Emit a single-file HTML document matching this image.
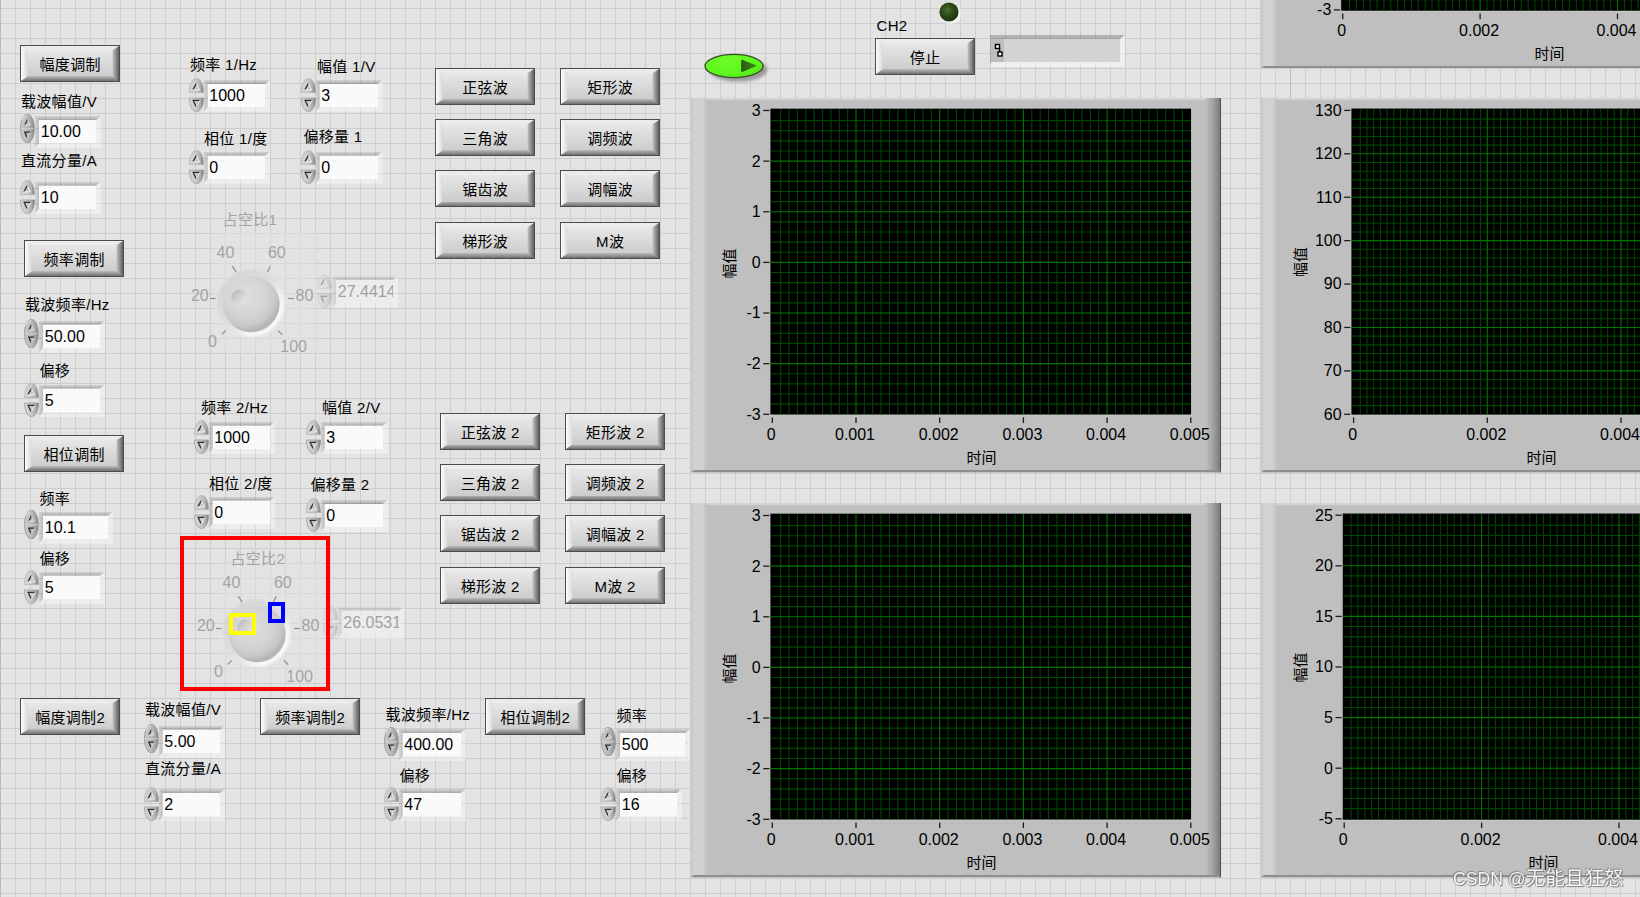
<!DOCTYPE html>
<html lang="zh-CN"><head><meta charset="utf-8"><title>LabVIEW front panel</title>
<style>
html,body{margin:0;padding:0}
body{width:1640px;height:897px;overflow:hidden;position:relative;background-color:#e3e3e3;
background-image:linear-gradient(to right,#cdcdcd 1px,transparent 1px),linear-gradient(to bottom,#cdcdcd 1px,transparent 1px);
background-size:15px 15px;background-position:0 8px;
font:15.5px/20px "Liberation Sans","Noto Sans CJK SC",sans-serif;color:#000}
.a{position:absolute}
.lb{position:absolute;white-space:nowrap;height:20px;line-height:20px;font-size:15px;letter-spacing:.3px}
.g{color:#a3a3a3}
.btn{position:absolute;width:100px;height:37px;box-sizing:border-box;border:1px solid #4c4c4c;text-align:center;line-height:35px;background:linear-gradient(to right,#fdfdfd 0,#dadada 6.5px,#dadada 6.5px,#c4c4c4 91.5px,#5e5e5e 98px)}
.btn::before{content:"";position:absolute;left:0;top:0;width:98px;height:35px;clip-path:polygon(0 0,6.5px 4.3px,6.5px 30.5px,0 35px,98px 35px,91.5px 30.5px,91.5px 4.3px,98px 0);background:linear-gradient(to bottom,#ebebeb 0,#ebebeb 4.3px,#e7e7e7 4.3px,#cccccc 30.5px,#b4b4b4 30.5px,#707070 35px)}
.btn span{position:relative;top:.6px;font-size:15px;letter-spacing:.3px;margin-right:-.3px}
.fld{position:absolute;box-sizing:border-box;border-style:solid;border-width:4px 5px 5px 4px;border-color:transparent rgba(255,255,255,.36) rgba(255,255,255,.36) transparent;background:#fafafa padding-box;height:32px}
.fld b{display:block;font-weight:normal;font-size:16px;height:23px;line-height:24px;padding-left:1.8px;overflow:hidden;white-space:nowrap}
.fld::before{content:"";position:absolute;left:-4px;top:-4px;right:-5px;height:4px;background:linear-gradient(to bottom,rgba(0,0,0,.07),rgba(0,0,0,.25));clip-path:polygon(0 0,100% 0,calc(100% - 5px) 100%,4px 100%)}
.fld::after{content:"";position:absolute;left:-4px;top:-4px;bottom:-5px;width:4px;background:linear-gradient(to right,rgba(0,0,0,.07),rgba(0,0,0,.17));clip-path:polygon(0 0,100% 4px,100% calc(100% - 5px),0 100%)}
.fld.d{background:#ececec padding-box;color:#a0a0a0}
.fld.d::before{background:linear-gradient(to bottom,rgba(0,0,0,.03),rgba(0,0,0,.12))}
.fld.d::after{background:linear-gradient(to right,rgba(0,0,0,.03),rgba(0,0,0,.08))}
svg{display:block}
svg text{font-family:"Liberation Sans","Noto Sans CJK SC",sans-serif;font-size:16px}
</style></head>
<body>
<svg width="0" height="0" style="position:absolute">
<defs>
<linearGradient id="spc" x1="0" y1="0" x2="1" y2="0"><stop offset="0" stop-color="#c9c9c9"/><stop offset=".5" stop-color="#bababa"/><stop offset=".82" stop-color="#a2a2a2"/><stop offset="1" stop-color="#7e7e7e"/></linearGradient>
<linearGradient id="sp" x1="0" y1="0" x2="1" y2="0"><stop offset="0" stop-color="#d6d6d6"/><stop offset=".45" stop-color="#cbcbcb"/><stop offset=".78" stop-color="#aeaeae"/><stop offset="1" stop-color="#7a7a7a"/></linearGradient>
</defs></svg>
<div class="a" style="left:0;top:0;width:1px;height:897px;background:#b9b9b9"></div>
<div class="btn" style="left:20px;top:45px"><span>幅度调制</span></div>
<div class="lb" style="left:21px;top:91.5px">载波幅值/V</div>
<svg class="a" style="left:20px;top:114px" width="15" height="29" viewBox="0 0 15 29"><ellipse cx="7.4" cy="14.6" rx="7" ry="14.3" fill="url(#spc)" stroke="#8c8c8c" stroke-width=".7"/><path d="M2.2,6.5 C3.2,3.6 5,1.8 7,1.3" stroke="#d9d9d9" stroke-width="1.2" fill="none"/><line x1="0.6" y1="14.7" x2="14.2" y2="14.7" stroke="#d4d4d4" stroke-width=".8"/><path d="M5,10.8 L7.2,6.3 L7.7,6.3" stroke="#2e2e2e" stroke-width="1.3" fill="none"/><path d="M5,11 L10.2,11 L7.7,6.5" stroke="#e9e9e9" stroke-width=".9" fill="none"/><path d="M10.2,18.1 L4.8,18.1 L6.9,23.3" stroke="#2e2e2e" stroke-width="1.3" fill="none"/><path d="M7.4,23.2 L10.3,18.4" stroke="#e9e9e9" stroke-width=".9" fill="none"/></svg><div class="fld" style="left:35px;top:116px;width:66px"><b>10.00</b></div>
<div class="lb" style="left:21px;top:151px">直流分量/A</div>
<svg class="a" style="left:20px;top:179.5px" width="15" height="34" viewBox="0 0 15 34"><path d="M0.5,14.6 C0.5,5 4,0.5 7.5,0.5 C11,0.5 14.5,5 14.5,14.6 Z" fill="url(#sp)" stroke="#a8a8a8" stroke-width=".6"/><path d="M0.5,20 C0.5,29 4,33.5 7.5,33.5 C11,33.5 14.5,29 14.5,20 Z" fill="url(#sp)" stroke="#8e8e8e" stroke-width=".6"/><path d="M4,11.6 L7,6.2 L7.6,6.2" stroke="#2e2e2e" stroke-width="1.3" fill="none"/><path d="M4,11.9 L10.6,11.9 L7.6,6.2" stroke="#f4f4f4" stroke-width="1" fill="none"/><path d="M10.5,22.4 L4.2,22.4 L7,28.5" stroke="#2e2e2e" stroke-width="1.3" fill="none"/><path d="M7.4,28.5 L10.8,22.6" stroke="#f4f4f4" stroke-width="1" fill="none"/></svg><div class="fld" style="left:35px;top:181.5px;width:66px"><b>10</b></div>
<div class="btn" style="left:24px;top:240px"><span>频率调制</span></div>
<div class="lb" style="left:25px;top:295px">载波频率/Hz</div>
<svg class="a" style="left:24px;top:318.5px" width="15" height="29" viewBox="0 0 15 29"><ellipse cx="7.4" cy="14.6" rx="7" ry="14.3" fill="url(#spc)" stroke="#8c8c8c" stroke-width=".7"/><path d="M2.2,6.5 C3.2,3.6 5,1.8 7,1.3" stroke="#d9d9d9" stroke-width="1.2" fill="none"/><line x1="0.6" y1="14.7" x2="14.2" y2="14.7" stroke="#d4d4d4" stroke-width=".8"/><path d="M5,10.8 L7.2,6.3 L7.7,6.3" stroke="#2e2e2e" stroke-width="1.3" fill="none"/><path d="M5,11 L10.2,11 L7.7,6.5" stroke="#e9e9e9" stroke-width=".9" fill="none"/><path d="M10.2,18.1 L4.8,18.1 L6.9,23.3" stroke="#2e2e2e" stroke-width="1.3" fill="none"/><path d="M7.4,23.2 L10.3,18.4" stroke="#e9e9e9" stroke-width=".9" fill="none"/></svg><div class="fld" style="left:39px;top:320.5px;width:66px"><b>50.00</b></div>
<div class="lb" style="left:39.5px;top:361px">偏移</div>
<svg class="a" style="left:24px;top:382.5px" width="15" height="34" viewBox="0 0 15 34"><path d="M0.5,14.6 C0.5,5 4,0.5 7.5,0.5 C11,0.5 14.5,5 14.5,14.6 Z" fill="url(#sp)" stroke="#a8a8a8" stroke-width=".6"/><path d="M0.5,20 C0.5,29 4,33.5 7.5,33.5 C11,33.5 14.5,29 14.5,20 Z" fill="url(#sp)" stroke="#8e8e8e" stroke-width=".6"/><path d="M4,11.6 L7,6.2 L7.6,6.2" stroke="#2e2e2e" stroke-width="1.3" fill="none"/><path d="M4,11.9 L10.6,11.9 L7.6,6.2" stroke="#f4f4f4" stroke-width="1" fill="none"/><path d="M10.5,22.4 L4.2,22.4 L7,28.5" stroke="#2e2e2e" stroke-width="1.3" fill="none"/><path d="M7.4,28.5 L10.8,22.6" stroke="#f4f4f4" stroke-width="1" fill="none"/></svg><div class="fld" style="left:39px;top:384.5px;width:66px"><b>5</b></div>
<div class="btn" style="left:24px;top:435px"><span>相位调制</span></div>
<div class="lb" style="left:39.5px;top:488.5px">频率</div>
<svg class="a" style="left:24px;top:509.5px" width="15" height="29" viewBox="0 0 15 29"><ellipse cx="7.4" cy="14.6" rx="7" ry="14.3" fill="url(#spc)" stroke="#8c8c8c" stroke-width=".7"/><path d="M2.2,6.5 C3.2,3.6 5,1.8 7,1.3" stroke="#d9d9d9" stroke-width="1.2" fill="none"/><line x1="0.6" y1="14.7" x2="14.2" y2="14.7" stroke="#d4d4d4" stroke-width=".8"/><path d="M5,10.8 L7.2,6.3 L7.7,6.3" stroke="#2e2e2e" stroke-width="1.3" fill="none"/><path d="M5,11 L10.2,11 L7.7,6.5" stroke="#e9e9e9" stroke-width=".9" fill="none"/><path d="M10.2,18.1 L4.8,18.1 L6.9,23.3" stroke="#2e2e2e" stroke-width="1.3" fill="none"/><path d="M7.4,23.2 L10.3,18.4" stroke="#e9e9e9" stroke-width=".9" fill="none"/></svg><div class="fld" style="left:39px;top:511.5px;width:74px"><b>10.1</b></div>
<div class="lb" style="left:39.5px;top:549px">偏移</div>
<svg class="a" style="left:24px;top:569.5px" width="15" height="34" viewBox="0 0 15 34"><path d="M0.5,14.6 C0.5,5 4,0.5 7.5,0.5 C11,0.5 14.5,5 14.5,14.6 Z" fill="url(#sp)" stroke="#a8a8a8" stroke-width=".6"/><path d="M0.5,20 C0.5,29 4,33.5 7.5,33.5 C11,33.5 14.5,29 14.5,20 Z" fill="url(#sp)" stroke="#8e8e8e" stroke-width=".6"/><path d="M4,11.6 L7,6.2 L7.6,6.2" stroke="#2e2e2e" stroke-width="1.3" fill="none"/><path d="M4,11.9 L10.6,11.9 L7.6,6.2" stroke="#f4f4f4" stroke-width="1" fill="none"/><path d="M10.5,22.4 L4.2,22.4 L7,28.5" stroke="#2e2e2e" stroke-width="1.3" fill="none"/><path d="M7.4,28.5 L10.8,22.6" stroke="#f4f4f4" stroke-width="1" fill="none"/></svg><div class="fld" style="left:39px;top:571.5px;width:66px"><b>5</b></div>
<div class="lb" style="left:190px;top:55px">频率 1/Hz</div>
<svg class="a" style="left:188.5px;top:78px" width="15" height="34" viewBox="0 0 15 34"><path d="M0.5,14.6 C0.5,5 4,0.5 7.5,0.5 C11,0.5 14.5,5 14.5,14.6 Z" fill="url(#sp)" stroke="#a8a8a8" stroke-width=".6"/><path d="M0.5,20 C0.5,29 4,33.5 7.5,33.5 C11,33.5 14.5,29 14.5,20 Z" fill="url(#sp)" stroke="#8e8e8e" stroke-width=".6"/><path d="M4,11.6 L7,6.2 L7.6,6.2" stroke="#2e2e2e" stroke-width="1.3" fill="none"/><path d="M4,11.9 L10.6,11.9 L7.6,6.2" stroke="#f4f4f4" stroke-width="1" fill="none"/><path d="M10.5,22.4 L4.2,22.4 L7,28.5" stroke="#2e2e2e" stroke-width="1.3" fill="none"/><path d="M7.4,28.5 L10.8,22.6" stroke="#f4f4f4" stroke-width="1" fill="none"/></svg><div class="fld" style="left:203.5px;top:80px;width:66.5px"><b>1000</b></div>
<div class="lb" style="left:317px;top:57px">幅值 1/V</div>
<svg class="a" style="left:300.5px;top:78px" width="15" height="34" viewBox="0 0 15 34"><path d="M0.5,14.6 C0.5,5 4,0.5 7.5,0.5 C11,0.5 14.5,5 14.5,14.6 Z" fill="url(#sp)" stroke="#a8a8a8" stroke-width=".6"/><path d="M0.5,20 C0.5,29 4,33.5 7.5,33.5 C11,33.5 14.5,29 14.5,20 Z" fill="url(#sp)" stroke="#8e8e8e" stroke-width=".6"/><path d="M4,11.6 L7,6.2 L7.6,6.2" stroke="#2e2e2e" stroke-width="1.3" fill="none"/><path d="M4,11.9 L10.6,11.9 L7.6,6.2" stroke="#f4f4f4" stroke-width="1" fill="none"/><path d="M10.5,22.4 L4.2,22.4 L7,28.5" stroke="#2e2e2e" stroke-width="1.3" fill="none"/><path d="M7.4,28.5 L10.8,22.6" stroke="#f4f4f4" stroke-width="1" fill="none"/></svg><div class="fld" style="left:315.5px;top:80px;width:67px"><b>3</b></div>
<div class="lb" style="left:204px;top:129px">相位 1/度</div>
<svg class="a" style="left:188.5px;top:149.5px" width="15" height="34" viewBox="0 0 15 34"><path d="M0.5,14.6 C0.5,5 4,0.5 7.5,0.5 C11,0.5 14.5,5 14.5,14.6 Z" fill="url(#sp)" stroke="#a8a8a8" stroke-width=".6"/><path d="M0.5,20 C0.5,29 4,33.5 7.5,33.5 C11,33.5 14.5,29 14.5,20 Z" fill="url(#sp)" stroke="#8e8e8e" stroke-width=".6"/><path d="M4,11.6 L7,6.2 L7.6,6.2" stroke="#2e2e2e" stroke-width="1.3" fill="none"/><path d="M4,11.9 L10.6,11.9 L7.6,6.2" stroke="#f4f4f4" stroke-width="1" fill="none"/><path d="M10.5,22.4 L4.2,22.4 L7,28.5" stroke="#2e2e2e" stroke-width="1.3" fill="none"/><path d="M7.4,28.5 L10.8,22.6" stroke="#f4f4f4" stroke-width="1" fill="none"/></svg><div class="fld" style="left:203.5px;top:151.5px;width:66.5px"><b>0</b></div>
<div class="lb" style="left:303.5px;top:126.5px">偏移量 1</div>
<svg class="a" style="left:300.5px;top:149.5px" width="15" height="34" viewBox="0 0 15 34"><path d="M0.5,14.6 C0.5,5 4,0.5 7.5,0.5 C11,0.5 14.5,5 14.5,14.6 Z" fill="url(#sp)" stroke="#a8a8a8" stroke-width=".6"/><path d="M0.5,20 C0.5,29 4,33.5 7.5,33.5 C11,33.5 14.5,29 14.5,20 Z" fill="url(#sp)" stroke="#8e8e8e" stroke-width=".6"/><path d="M4,11.6 L7,6.2 L7.6,6.2" stroke="#2e2e2e" stroke-width="1.3" fill="none"/><path d="M4,11.9 L10.6,11.9 L7.6,6.2" stroke="#f4f4f4" stroke-width="1" fill="none"/><path d="M10.5,22.4 L4.2,22.4 L7,28.5" stroke="#2e2e2e" stroke-width="1.3" fill="none"/><path d="M7.4,28.5 L10.8,22.6" stroke="#f4f4f4" stroke-width="1" fill="none"/></svg><div class="fld" style="left:315.5px;top:151.5px;width:67px"><b>0</b></div>
<div class="lb" style="left:201px;top:398px">频率 2/Hz</div>
<svg class="a" style="left:193.5px;top:419.5px" width="15" height="34" viewBox="0 0 15 34"><path d="M0.5,14.6 C0.5,5 4,0.5 7.5,0.5 C11,0.5 14.5,5 14.5,14.6 Z" fill="url(#sp)" stroke="#a8a8a8" stroke-width=".6"/><path d="M0.5,20 C0.5,29 4,33.5 7.5,33.5 C11,33.5 14.5,29 14.5,20 Z" fill="url(#sp)" stroke="#8e8e8e" stroke-width=".6"/><path d="M4,11.6 L7,6.2 L7.6,6.2" stroke="#2e2e2e" stroke-width="1.3" fill="none"/><path d="M4,11.9 L10.6,11.9 L7.6,6.2" stroke="#f4f4f4" stroke-width="1" fill="none"/><path d="M10.5,22.4 L4.2,22.4 L7,28.5" stroke="#2e2e2e" stroke-width="1.3" fill="none"/><path d="M7.4,28.5 L10.8,22.6" stroke="#f4f4f4" stroke-width="1" fill="none"/></svg><div class="fld" style="left:208.5px;top:421.5px;width:66.5px"><b>1000</b></div>
<div class="lb" style="left:322px;top:398px">幅值 2/V</div>
<svg class="a" style="left:305.5px;top:419.5px" width="15" height="34" viewBox="0 0 15 34"><path d="M0.5,14.6 C0.5,5 4,0.5 7.5,0.5 C11,0.5 14.5,5 14.5,14.6 Z" fill="url(#sp)" stroke="#a8a8a8" stroke-width=".6"/><path d="M0.5,20 C0.5,29 4,33.5 7.5,33.5 C11,33.5 14.5,29 14.5,20 Z" fill="url(#sp)" stroke="#8e8e8e" stroke-width=".6"/><path d="M4,11.6 L7,6.2 L7.6,6.2" stroke="#2e2e2e" stroke-width="1.3" fill="none"/><path d="M4,11.9 L10.6,11.9 L7.6,6.2" stroke="#f4f4f4" stroke-width="1" fill="none"/><path d="M10.5,22.4 L4.2,22.4 L7,28.5" stroke="#2e2e2e" stroke-width="1.3" fill="none"/><path d="M7.4,28.5 L10.8,22.6" stroke="#f4f4f4" stroke-width="1" fill="none"/></svg><div class="fld" style="left:320.5px;top:421.5px;width:67px"><b>3</b></div>
<div class="lb" style="left:209px;top:473.5px">相位 2/度</div>
<svg class="a" style="left:193.5px;top:494.5px" width="15" height="34" viewBox="0 0 15 34"><path d="M0.5,14.6 C0.5,5 4,0.5 7.5,0.5 C11,0.5 14.5,5 14.5,14.6 Z" fill="url(#sp)" stroke="#a8a8a8" stroke-width=".6"/><path d="M0.5,20 C0.5,29 4,33.5 7.5,33.5 C11,33.5 14.5,29 14.5,20 Z" fill="url(#sp)" stroke="#8e8e8e" stroke-width=".6"/><path d="M4,11.6 L7,6.2 L7.6,6.2" stroke="#2e2e2e" stroke-width="1.3" fill="none"/><path d="M4,11.9 L10.6,11.9 L7.6,6.2" stroke="#f4f4f4" stroke-width="1" fill="none"/><path d="M10.5,22.4 L4.2,22.4 L7,28.5" stroke="#2e2e2e" stroke-width="1.3" fill="none"/><path d="M7.4,28.5 L10.8,22.6" stroke="#f4f4f4" stroke-width="1" fill="none"/></svg><div class="fld" style="left:208.5px;top:496.5px;width:66.5px"><b>0</b></div>
<div class="lb" style="left:310.5px;top:474.5px">偏移量 2</div>
<svg class="a" style="left:305.5px;top:498px" width="15" height="34" viewBox="0 0 15 34"><path d="M0.5,14.6 C0.5,5 4,0.5 7.5,0.5 C11,0.5 14.5,5 14.5,14.6 Z" fill="url(#sp)" stroke="#a8a8a8" stroke-width=".6"/><path d="M0.5,20 C0.5,29 4,33.5 7.5,33.5 C11,33.5 14.5,29 14.5,20 Z" fill="url(#sp)" stroke="#8e8e8e" stroke-width=".6"/><path d="M4,11.6 L7,6.2 L7.6,6.2" stroke="#2e2e2e" stroke-width="1.3" fill="none"/><path d="M4,11.9 L10.6,11.9 L7.6,6.2" stroke="#f4f4f4" stroke-width="1" fill="none"/><path d="M10.5,22.4 L4.2,22.4 L7,28.5" stroke="#2e2e2e" stroke-width="1.3" fill="none"/><path d="M7.4,28.5 L10.8,22.6" stroke="#f4f4f4" stroke-width="1" fill="none"/></svg><div class="fld" style="left:320.5px;top:500px;width:67px"><b>0</b></div>
<div class="btn" style="left:435px;top:68px"><span>正弦波</span></div>
<div class="btn" style="left:560px;top:68px"><span>矩形波</span></div>
<div class="btn" style="left:435px;top:119px"><span>三角波</span></div>
<div class="btn" style="left:560px;top:119px"><span>调频波</span></div>
<div class="btn" style="left:435px;top:170px"><span>锯齿波</span></div>
<div class="btn" style="left:560px;top:170px"><span>调幅波</span></div>
<div class="btn" style="left:435px;top:222px"><span>梯形波</span></div>
<div class="btn" style="left:560px;top:222px"><span>M波</span></div>
<div class="btn" style="left:440px;top:413px"><span>正弦波 2</span></div>
<div class="btn" style="left:565px;top:413px"><span>矩形波 2</span></div>
<div class="btn" style="left:440px;top:464px"><span>三角波 2</span></div>
<div class="btn" style="left:565px;top:464px"><span>调频波 2</span></div>
<div class="btn" style="left:440px;top:515px"><span>锯齿波 2</span></div>
<div class="btn" style="left:565px;top:515px"><span>调幅波 2</span></div>
<div class="btn" style="left:440px;top:567px"><span>梯形波 2</span></div>
<div class="btn" style="left:565px;top:567px"><span>M波 2</span></div>
<div class="btn" style="left:20px;top:698px"><span>幅度调制2</span></div>
<div class="lb" style="left:145px;top:700px">载波幅值/V</div>
<svg class="a" style="left:143.5px;top:723.5px" width="15" height="29" viewBox="0 0 15 29"><ellipse cx="7.4" cy="14.6" rx="7" ry="14.3" fill="url(#spc)" stroke="#8c8c8c" stroke-width=".7"/><path d="M2.2,6.5 C3.2,3.6 5,1.8 7,1.3" stroke="#d9d9d9" stroke-width="1.2" fill="none"/><line x1="0.6" y1="14.7" x2="14.2" y2="14.7" stroke="#d4d4d4" stroke-width=".8"/><path d="M5,10.8 L7.2,6.3 L7.7,6.3" stroke="#2e2e2e" stroke-width="1.3" fill="none"/><path d="M5,11 L10.2,11 L7.7,6.5" stroke="#e9e9e9" stroke-width=".9" fill="none"/><path d="M10.2,18.1 L4.8,18.1 L6.9,23.3" stroke="#2e2e2e" stroke-width="1.3" fill="none"/><path d="M7.4,23.2 L10.3,18.4" stroke="#e9e9e9" stroke-width=".9" fill="none"/></svg><div class="fld" style="left:158.5px;top:725.5px;width:66.5px"><b>5.00</b></div>
<div class="lb" style="left:145px;top:758.5px">直流分量/A</div>
<svg class="a" style="left:143.5px;top:787px" width="15" height="34" viewBox="0 0 15 34"><path d="M0.5,14.6 C0.5,5 4,0.5 7.5,0.5 C11,0.5 14.5,5 14.5,14.6 Z" fill="url(#sp)" stroke="#a8a8a8" stroke-width=".6"/><path d="M0.5,20 C0.5,29 4,33.5 7.5,33.5 C11,33.5 14.5,29 14.5,20 Z" fill="url(#sp)" stroke="#8e8e8e" stroke-width=".6"/><path d="M4,11.6 L7,6.2 L7.6,6.2" stroke="#2e2e2e" stroke-width="1.3" fill="none"/><path d="M4,11.9 L10.6,11.9 L7.6,6.2" stroke="#f4f4f4" stroke-width="1" fill="none"/><path d="M10.5,22.4 L4.2,22.4 L7,28.5" stroke="#2e2e2e" stroke-width="1.3" fill="none"/><path d="M7.4,28.5 L10.8,22.6" stroke="#f4f4f4" stroke-width="1" fill="none"/></svg><div class="fld" style="left:158.5px;top:789px;width:66.5px"><b>2</b></div>
<div class="btn" style="left:260px;top:698px"><span>频率调制2</span></div>
<div class="lb" style="left:385.5px;top:705px">载波频率/Hz</div>
<svg class="a" style="left:383.5px;top:727px" width="15" height="29" viewBox="0 0 15 29"><ellipse cx="7.4" cy="14.6" rx="7" ry="14.3" fill="url(#spc)" stroke="#8c8c8c" stroke-width=".7"/><path d="M2.2,6.5 C3.2,3.6 5,1.8 7,1.3" stroke="#d9d9d9" stroke-width="1.2" fill="none"/><line x1="0.6" y1="14.7" x2="14.2" y2="14.7" stroke="#d4d4d4" stroke-width=".8"/><path d="M5,10.8 L7.2,6.3 L7.7,6.3" stroke="#2e2e2e" stroke-width="1.3" fill="none"/><path d="M5,11 L10.2,11 L7.7,6.5" stroke="#e9e9e9" stroke-width=".9" fill="none"/><path d="M10.2,18.1 L4.8,18.1 L6.9,23.3" stroke="#2e2e2e" stroke-width="1.3" fill="none"/><path d="M7.4,23.2 L10.3,18.4" stroke="#e9e9e9" stroke-width=".9" fill="none"/></svg><div class="fld" style="left:398.5px;top:729px;width:67px"><b>400.00</b></div>
<div class="lb" style="left:399.5px;top:766px">偏移</div>
<svg class="a" style="left:383.5px;top:787px" width="15" height="34" viewBox="0 0 15 34"><path d="M0.5,14.6 C0.5,5 4,0.5 7.5,0.5 C11,0.5 14.5,5 14.5,14.6 Z" fill="url(#sp)" stroke="#a8a8a8" stroke-width=".6"/><path d="M0.5,20 C0.5,29 4,33.5 7.5,33.5 C11,33.5 14.5,29 14.5,20 Z" fill="url(#sp)" stroke="#8e8e8e" stroke-width=".6"/><path d="M4,11.6 L7,6.2 L7.6,6.2" stroke="#2e2e2e" stroke-width="1.3" fill="none"/><path d="M4,11.9 L10.6,11.9 L7.6,6.2" stroke="#f4f4f4" stroke-width="1" fill="none"/><path d="M10.5,22.4 L4.2,22.4 L7,28.5" stroke="#2e2e2e" stroke-width="1.3" fill="none"/><path d="M7.4,28.5 L10.8,22.6" stroke="#f4f4f4" stroke-width="1" fill="none"/></svg><div class="fld" style="left:398.5px;top:789px;width:67px"><b>47</b></div>
<div class="btn" style="left:485px;top:698px"><span>相位调制2</span></div>
<div class="lb" style="left:616.5px;top:706px">频率</div>
<svg class="a" style="left:601px;top:727px" width="15" height="29" viewBox="0 0 15 29"><ellipse cx="7.4" cy="14.6" rx="7" ry="14.3" fill="url(#spc)" stroke="#8c8c8c" stroke-width=".7"/><path d="M2.2,6.5 C3.2,3.6 5,1.8 7,1.3" stroke="#d9d9d9" stroke-width="1.2" fill="none"/><line x1="0.6" y1="14.7" x2="14.2" y2="14.7" stroke="#d4d4d4" stroke-width=".8"/><path d="M5,10.8 L7.2,6.3 L7.7,6.3" stroke="#2e2e2e" stroke-width="1.3" fill="none"/><path d="M5,11 L10.2,11 L7.7,6.5" stroke="#e9e9e9" stroke-width=".9" fill="none"/><path d="M10.2,18.1 L4.8,18.1 L6.9,23.3" stroke="#2e2e2e" stroke-width="1.3" fill="none"/><path d="M7.4,23.2 L10.3,18.4" stroke="#e9e9e9" stroke-width=".9" fill="none"/></svg><div class="fld" style="left:616px;top:729px;width:74px"><b>500</b></div>
<div class="lb" style="left:616.5px;top:766px">偏移</div>
<svg class="a" style="left:601px;top:787px" width="15" height="34" viewBox="0 0 15 34"><path d="M0.5,14.6 C0.5,5 4,0.5 7.5,0.5 C11,0.5 14.5,5 14.5,14.6 Z" fill="url(#sp)" stroke="#a8a8a8" stroke-width=".6"/><path d="M0.5,20 C0.5,29 4,33.5 7.5,33.5 C11,33.5 14.5,29 14.5,20 Z" fill="url(#sp)" stroke="#8e8e8e" stroke-width=".6"/><path d="M4,11.6 L7,6.2 L7.6,6.2" stroke="#2e2e2e" stroke-width="1.3" fill="none"/><path d="M4,11.9 L10.6,11.9 L7.6,6.2" stroke="#f4f4f4" stroke-width="1" fill="none"/><path d="M10.5,22.4 L4.2,22.4 L7,28.5" stroke="#2e2e2e" stroke-width="1.3" fill="none"/><path d="M7.4,28.5 L10.8,22.6" stroke="#f4f4f4" stroke-width="1" fill="none"/></svg><div class="fld" style="left:616px;top:789px;width:66px"><b>16</b></div>
<div class="a" style="left:214px;top:233px;width:102px;height:120px;background:rgba(227,227,227,.5)"></div><svg class="a" style="left:176px;top:238px" width="150" height="120"><defs><radialGradient id="kb1" cx=".4" cy=".36" r=".66"><stop offset="0" stop-color="#dedede"/><stop offset=".55" stop-color="#d4d4d4"/><stop offset=".8" stop-color="#c8c8c8"/><stop offset=".94" stop-color="#b4b4b4"/><stop offset="1" stop-color="#bcbcbc"/></radialGradient><linearGradient id="kd1" x1=".15" y1=".15" x2=".85" y2=".85"><stop offset="0" stop-color="#bcbcbc"/><stop offset=".4" stop-color="#cfcfcf"/><stop offset="1" stop-color="#e3e3e3"/></linearGradient><linearGradient id="kr1" x1=".15" y1=".15" x2=".85" y2=".85"><stop offset="0" stop-color="#d5d5d5"/><stop offset=".5" stop-color="#dfdfdf"/><stop offset=".78" stop-color="#f3f3f3"/><stop offset="1" stop-color="#f9f9f9"/></linearGradient><filter id="kf1" x="-10%" y="-10%" width="120%" height="120%"><feGaussianBlur stdDeviation="1"/></filter><filter id="kg1" x="-10%" y="-10%" width="120%" height="120%"><feGaussianBlur stdDeviation="0.5"/></filter></defs><circle cx="74.9" cy="65.2" r="33.6" fill="url(#kr1)" filter="url(#kf1)"/><circle cx="75.3" cy="66" r="28.3" fill="url(#kb1)" filter="url(#kg1)"/><ellipse cx="63.6" cy="59.4" rx="8.2" ry="7.8" fill="url(#kd1)" filter="url(#kg1)"/><line x1="56.2" y1="28.2" x2="60.2" y2="34.2" stroke="#8f8f8f" stroke-width="1.2"/><line x1="94.3" y1="28.2" x2="91.3" y2="34.2" stroke="#8f8f8f" stroke-width="1.2"/><line x1="34" y1="60.5" x2="39.5" y2="60.5" stroke="#8f8f8f" stroke-width="1.2"/><line x1="112" y1="60.5" x2="118" y2="60.5" stroke="#8f8f8f" stroke-width="1.2"/><line x1="45.8" y1="96.4" x2="49.8" y2="92.4" stroke="#8f8f8f" stroke-width="1.2"/><line x1="101.7" y1="92.4" x2="106.3" y2="96.8" stroke="#8f8f8f" stroke-width="1.2"/><text x="49.4" y="20.1" fill="#a3a3a3" text-anchor="middle">40</text><text x="100.8" y="20.1" fill="#a3a3a3" text-anchor="middle">60</text><text x="32.7" y="63.4" fill="#a3a3a3" text-anchor="end">20</text><text x="119.5" y="63.4" fill="#a3a3a3" text-anchor="start">80</text><text x="36.4" y="108.9" fill="#a3a3a3" text-anchor="middle">0</text><text x="117.6" y="113.5" fill="#a3a3a3" text-anchor="middle">100</text></svg>
<div class="lb g" style="left:222.6px;top:210px">占空比1</div>
<svg class="a" style="left:317px;top:274px;opacity:.36" width="15" height="34" viewBox="0 0 15 34"><path d="M0.5,14.6 C0.5,5 4,0.5 7.5,0.5 C11,0.5 14.5,5 14.5,14.6 Z" fill="url(#sp)" stroke="#a8a8a8" stroke-width=".6"/><path d="M0.5,20 C0.5,29 4,33.5 7.5,33.5 C11,33.5 14.5,29 14.5,20 Z" fill="url(#sp)" stroke="#8e8e8e" stroke-width=".6"/><path d="M4,11.6 L7,6.2 L7.6,6.2" stroke="#2e2e2e" stroke-width="1.3" fill="none"/><path d="M4,11.9 L10.6,11.9 L7.6,6.2" stroke="#f4f4f4" stroke-width="1" fill="none"/><path d="M10.5,22.4 L4.2,22.4 L7,28.5" stroke="#2e2e2e" stroke-width="1.3" fill="none"/><path d="M7.4,28.5 L10.8,22.6" stroke="#f4f4f4" stroke-width="1" fill="none"/></svg><div class="fld d" style="left:332px;top:276px;width:66px"><b>27.4414</b></div>
<div class="a" style="left:219.5px;top:563px;width:102px;height:120px;background:rgba(227,227,227,.5)"></div><svg class="a" style="left:181.5px;top:568px" width="150" height="120"><defs><radialGradient id="kb2" cx=".4" cy=".36" r=".66"><stop offset="0" stop-color="#dedede"/><stop offset=".55" stop-color="#d4d4d4"/><stop offset=".8" stop-color="#c8c8c8"/><stop offset=".94" stop-color="#b4b4b4"/><stop offset="1" stop-color="#bcbcbc"/></radialGradient><linearGradient id="kd2" x1=".15" y1=".15" x2=".85" y2=".85"><stop offset="0" stop-color="#bcbcbc"/><stop offset=".4" stop-color="#cfcfcf"/><stop offset="1" stop-color="#e3e3e3"/></linearGradient><linearGradient id="kr2" x1=".15" y1=".15" x2=".85" y2=".85"><stop offset="0" stop-color="#d5d5d5"/><stop offset=".5" stop-color="#dfdfdf"/><stop offset=".78" stop-color="#f3f3f3"/><stop offset="1" stop-color="#f9f9f9"/></linearGradient><filter id="kf2" x="-10%" y="-10%" width="120%" height="120%"><feGaussianBlur stdDeviation="1"/></filter><filter id="kg2" x="-10%" y="-10%" width="120%" height="120%"><feGaussianBlur stdDeviation="0.5"/></filter></defs><circle cx="74.9" cy="65.2" r="33.6" fill="url(#kr2)" filter="url(#kf2)"/><circle cx="75.3" cy="66" r="28.3" fill="url(#kb2)" filter="url(#kg2)"/><ellipse cx="63.6" cy="59.4" rx="8.2" ry="7.8" fill="url(#kd2)" filter="url(#kg2)"/><line x1="56.2" y1="28.2" x2="60.2" y2="34.2" stroke="#8f8f8f" stroke-width="1.2"/><line x1="94.3" y1="28.2" x2="91.3" y2="34.2" stroke="#8f8f8f" stroke-width="1.2"/><line x1="34" y1="60.5" x2="39.5" y2="60.5" stroke="#8f8f8f" stroke-width="1.2"/><line x1="112" y1="60.5" x2="118" y2="60.5" stroke="#8f8f8f" stroke-width="1.2"/><line x1="45.8" y1="96.4" x2="49.8" y2="92.4" stroke="#8f8f8f" stroke-width="1.2"/><line x1="101.7" y1="92.4" x2="106.3" y2="96.8" stroke="#8f8f8f" stroke-width="1.2"/><text x="49.4" y="20.1" fill="#a3a3a3" text-anchor="middle">40</text><text x="100.8" y="20.1" fill="#a3a3a3" text-anchor="middle">60</text><text x="32.7" y="63.4" fill="#a3a3a3" text-anchor="end">20</text><text x="119.5" y="63.4" fill="#a3a3a3" text-anchor="start">80</text><text x="36.4" y="108.9" fill="#a3a3a3" text-anchor="middle">0</text><text x="117.6" y="113.5" fill="#a3a3a3" text-anchor="middle">100</text></svg>
<div class="lb g" style="left:230.5px;top:548.5px">占空比2</div>
<svg class="a" style="left:322.5px;top:604.5px;opacity:.36" width="15" height="34" viewBox="0 0 15 34"><path d="M0.5,14.6 C0.5,5 4,0.5 7.5,0.5 C11,0.5 14.5,5 14.5,14.6 Z" fill="url(#sp)" stroke="#a8a8a8" stroke-width=".6"/><path d="M0.5,20 C0.5,29 4,33.5 7.5,33.5 C11,33.5 14.5,29 14.5,20 Z" fill="url(#sp)" stroke="#8e8e8e" stroke-width=".6"/><path d="M4,11.6 L7,6.2 L7.6,6.2" stroke="#2e2e2e" stroke-width="1.3" fill="none"/><path d="M4,11.9 L10.6,11.9 L7.6,6.2" stroke="#f4f4f4" stroke-width="1" fill="none"/><path d="M10.5,22.4 L4.2,22.4 L7,28.5" stroke="#2e2e2e" stroke-width="1.3" fill="none"/><path d="M7.4,28.5 L10.8,22.6" stroke="#f4f4f4" stroke-width="1" fill="none"/></svg><div class="fld d" style="left:337.5px;top:606.5px;width:66px"><b>26.0531</b></div>
<div class="a" style="left:180px;top:536px;width:142px;height:147px;border:4px solid #fe0000"></div>
<div class="a" style="left:229px;top:613px;width:19px;height:14px;border:4px solid #ffff00"></div>
<div class="a" style="left:268px;top:602px;width:9px;height:13px;border:4px solid #0000fe"></div>
<svg class="a" style="left:695px;top:45px" width="85" height="45">
<defs><radialGradient id="tg" cx=".35" cy=".3" r=".9"><stop offset="0" stop-color="#6cfb28"/><stop offset=".6" stop-color="#5cf71c"/><stop offset="1" stop-color="#4fe010"/></radialGradient>
<filter id="bl" x="-20%" y="-40%" width="140%" height="180%"><feGaussianBlur stdDeviation="1.6"/></filter><filter id="bl3" x="-20%" y="-20%" width="140%" height="140%"><feGaussianBlur stdDeviation="0.55"/></filter><linearGradient id="tt" x1="0" x2="1" y1="0" y2="0"><stop offset="0" stop-color="#2a5810"/><stop offset="1" stop-color="#3f8a1c"/></linearGradient></defs>
<ellipse cx="43" cy="24.8" rx="29.5" ry="11.8" fill="#9c9c9c" filter="url(#bl)"/>
<ellipse cx="39" cy="21" rx="29" ry="11.6" fill="url(#tg)" stroke="#3a4d2e" stroke-width="1.3"/>
<path d="M46.8,15.2 L61,20.7 L46.8,26.4 Z" fill="url(#tt)" stroke="url(#tt)" stroke-width="1.2" stroke-linejoin="round" filter="url(#bl3)"/>
</svg>
<svg class="a" style="left:934px;top:0" width="32" height="28">
<defs><radialGradient id="led" cx=".42" cy=".4" r=".6"><stop offset="0" stop-color="#4a7030"/><stop offset=".55" stop-color="#2b4818"/><stop offset="1" stop-color="#1e360f"/></radialGradient>
<filter id="bl2" x="-30%" y="-30%" width="160%" height="160%"><feGaussianBlur stdDeviation="1"/></filter></defs>
<circle cx="16.6" cy="13.8" r="10" fill="#fbfbfb" filter="url(#bl2)"/>
<circle cx="15" cy="12" r="9.6" fill="url(#led)"/>
</svg>
<div class="lb" style="left:876.5px;top:16px">CH2</div>
<div class="btn" style="left:875px;top:38px"><span>停止</span></div>
<div class="a" style="left:990px;top:35px;width:135px;height:32px;box-sizing:border-box;border-style:solid;border-width:4px 5px 5px 1px;border-color:rgba(0,0,0,.22) rgba(255,255,255,.45) rgba(255,255,255,.42) rgba(0,0,0,.18);background:#d3d3d3 padding-box"><div class="a" style="left:0;top:0;width:13px;height:23px;background:#bebebe"></div><svg class="a" style="left:3px;top:4px" width="10" height="16"><rect x="1.5" y="1.5" width="4" height="4" fill="#fff" stroke="#000" stroke-width="1.4"/><rect x="4" y="9" width="4" height="4" fill="#fff" stroke="#000" stroke-width="1.4"/><line x1="5.6" y1="5.5" x2="5.6" y2="9" stroke="#000" stroke-width="1.4"/></svg></div>
<svg class="a" style="left:690.5px;top:98.4px" width="530.5" height="374.2" viewBox="0 0 530.5 374.2"><defs><linearGradient id="fl1" x1="0" x2="1" y1="0" y2="0"><stop offset="0" stop-color="#c6c6c6"/><stop offset=".2" stop-color="#d2d2d2"/><stop offset=".75" stop-color="#d2d2d2"/><stop offset="1" stop-color="#c2c2c2"/></linearGradient><linearGradient id="fr1" x1="0" x2="1" y1="0" y2="0"><stop offset="0" stop-color="#bfbfbf"/><stop offset=".45" stop-color="#a3a3a3"/><stop offset="1" stop-color="#747474"/></linearGradient></defs><rect width="530.5" height="374.2" fill="#bfbfbf"/><rect x="0" y="0" width="530.5" height="2.2" fill="#d2d2d2"/><rect x="0" y="0" width="15.5" height="374.2" fill="url(#fl1)"/><rect x="514.5" y="0" width="16" height="374.2" fill="url(#fr1)"/><polygon points="0,374.2 3,371.9 530.5,371.9 530.5,374.2" fill="#8e8e8e"/><rect x="529.2" y="0" width="1.3" height="374.2" fill="#444"/><rect x="79.2" y="10.4" width="421.7" height="306.8" fill="#d6d6d6"/><rect x="79.2" y="10.4" width="420.9" height="306" fill="#4a4a4a"/><rect x="79.8" y="11" width="420.3" height="305.4" fill="#000"/><clipPath id="cp1"><rect x="79.8" y="11" width="420.3" height="305.4"/></clipPath><g clip-path="url(#cp1)" fill="none"><path d="M89.67,11V316.4M98.04,11V316.4M106.41,11V316.4M114.78,11V316.4M123.15,11V316.4M131.52,11V316.4M139.89,11V316.4M148.26,11V316.4M156.63,11V316.4M173.37,11V316.4M181.74,11V316.4M190.11,11V316.4M198.48,11V316.4M206.85,11V316.4M215.22,11V316.4M223.59,11V316.4M231.96,11V316.4M240.33,11V316.4M257.07,11V316.4M265.44,11V316.4M273.81,11V316.4M282.18,11V316.4M290.55,11V316.4M298.92,11V316.4M307.29,11V316.4M315.66,11V316.4M324.03,11V316.4M340.77,11V316.4M349.14,11V316.4M357.51,11V316.4M365.88,11V316.4M374.25,11V316.4M382.62,11V316.4M390.99,11V316.4M399.36,11V316.4M407.73,11V316.4M424.47,11V316.4M432.84,11V316.4M441.21,11V316.4M449.58,11V316.4M457.95,11V316.4M466.32,11V316.4M474.69,11V316.4M483.06,11V316.4M491.43,11V316.4M79.8,22.63H500.1M79.8,32.75H500.1M79.8,42.88H500.1M79.8,53.01H500.1M79.8,73.26H500.1M79.8,83.39H500.1M79.8,93.52H500.1M79.8,103.64H500.1M79.8,123.90H500.1M79.8,134.02H500.1M79.8,144.15H500.1M79.8,154.28H500.1M79.8,174.53H500.1M79.8,184.66H500.1M79.8,194.79H500.1M79.8,204.91H500.1M79.8,225.17H500.1M79.8,235.29H500.1M79.8,245.42H500.1M79.8,255.55H500.1M79.8,275.80H500.1M79.8,285.93H500.1M79.8,296.06H500.1M79.8,306.18H500.1" stroke="#004500" stroke-width="1.1"/><path d="M165.00,11V316.4M248.70,11V316.4M332.40,11V316.4M416.10,11V316.4M79.8,63.14H500.1M79.8,113.77H500.1M79.8,164.41H500.1M79.8,215.04H500.1M79.8,265.68H500.1" stroke="#007600" stroke-width="1.1"/></g><line x1="72.2" y1="12.50" x2="78.3" y2="12.50" stroke="#1c1c1c" stroke-width="1.3"/><text x="69.6" y="17.90" text-anchor="end">3</text><line x1="72.2" y1="63.14" x2="78.3" y2="63.14" stroke="#1c1c1c" stroke-width="1.3"/><text x="69.6" y="68.54" text-anchor="end">2</text><line x1="72.2" y1="113.77" x2="78.3" y2="113.77" stroke="#1c1c1c" stroke-width="1.3"/><text x="69.6" y="119.17" text-anchor="end">1</text><line x1="72.2" y1="164.41" x2="78.3" y2="164.41" stroke="#1c1c1c" stroke-width="1.3"/><text x="69.6" y="169.81" text-anchor="end">0</text><line x1="72.2" y1="215.04" x2="78.3" y2="215.04" stroke="#1c1c1c" stroke-width="1.3"/><text x="69.6" y="220.44" text-anchor="end">-1</text><line x1="72.2" y1="265.68" x2="78.3" y2="265.68" stroke="#1c1c1c" stroke-width="1.3"/><text x="69.6" y="271.07" text-anchor="end">-2</text><line x1="72.2" y1="316.31" x2="78.3" y2="316.31" stroke="#1c1c1c" stroke-width="1.3"/><text x="69.6" y="321.71" text-anchor="end">-3</text><line x1="81.30" y1="319.4" x2="81.30" y2="325" stroke="#1c1c1c" stroke-width="1.3"/><text x="80.30" y="341.6" text-anchor="middle">0</text><line x1="165.00" y1="319.4" x2="165.00" y2="325" stroke="#1c1c1c" stroke-width="1.3"/><text x="164.00" y="341.6" text-anchor="middle">0.001</text><line x1="248.70" y1="319.4" x2="248.70" y2="325" stroke="#1c1c1c" stroke-width="1.3"/><text x="247.70" y="341.6" text-anchor="middle">0.002</text><line x1="332.40" y1="319.4" x2="332.40" y2="325" stroke="#1c1c1c" stroke-width="1.3"/><text x="331.40" y="341.6" text-anchor="middle">0.003</text><line x1="416.10" y1="319.4" x2="416.10" y2="325" stroke="#1c1c1c" stroke-width="1.3"/><text x="415.10" y="341.6" text-anchor="middle">0.004</text><line x1="499.80" y1="319.4" x2="499.80" y2="325" stroke="#1c1c1c" stroke-width="1.3"/><text x="498.80" y="341.6" text-anchor="middle">0.005</text><text x="290.5" y="365.2" text-anchor="middle" style="font-size:15px">时间</text><text transform="translate(44.4,165.5) rotate(-90)" text-anchor="middle" style="font-size:15px">幅值</text></svg>
<svg class="a" style="left:690.5px;top:503.4px" width="530.5" height="374.2" viewBox="0 0 530.5 374.2"><defs><linearGradient id="fl2" x1="0" x2="1" y1="0" y2="0"><stop offset="0" stop-color="#c6c6c6"/><stop offset=".2" stop-color="#d2d2d2"/><stop offset=".75" stop-color="#d2d2d2"/><stop offset="1" stop-color="#c2c2c2"/></linearGradient><linearGradient id="fr2" x1="0" x2="1" y1="0" y2="0"><stop offset="0" stop-color="#bfbfbf"/><stop offset=".45" stop-color="#a3a3a3"/><stop offset="1" stop-color="#747474"/></linearGradient></defs><rect width="530.5" height="374.2" fill="#bfbfbf"/><rect x="0" y="0" width="530.5" height="2.2" fill="#d2d2d2"/><rect x="0" y="0" width="15.5" height="374.2" fill="url(#fl2)"/><rect x="514.5" y="0" width="16" height="374.2" fill="url(#fr2)"/><polygon points="0,374.2 3,371.9 530.5,371.9 530.5,374.2" fill="#8e8e8e"/><rect x="529.2" y="0" width="1.3" height="374.2" fill="#444"/><rect x="79.2" y="10.4" width="421.7" height="306.8" fill="#d6d6d6"/><rect x="79.2" y="10.4" width="420.9" height="306" fill="#4a4a4a"/><rect x="79.8" y="11" width="420.3" height="305.4" fill="#000"/><clipPath id="cp2"><rect x="79.8" y="11" width="420.3" height="305.4"/></clipPath><g clip-path="url(#cp2)" fill="none"><path d="M89.67,11V316.4M98.04,11V316.4M106.41,11V316.4M114.78,11V316.4M123.15,11V316.4M131.52,11V316.4M139.89,11V316.4M148.26,11V316.4M156.63,11V316.4M173.37,11V316.4M181.74,11V316.4M190.11,11V316.4M198.48,11V316.4M206.85,11V316.4M215.22,11V316.4M223.59,11V316.4M231.96,11V316.4M240.33,11V316.4M257.07,11V316.4M265.44,11V316.4M273.81,11V316.4M282.18,11V316.4M290.55,11V316.4M298.92,11V316.4M307.29,11V316.4M315.66,11V316.4M324.03,11V316.4M340.77,11V316.4M349.14,11V316.4M357.51,11V316.4M365.88,11V316.4M374.25,11V316.4M382.62,11V316.4M390.99,11V316.4M399.36,11V316.4M407.73,11V316.4M424.47,11V316.4M432.84,11V316.4M441.21,11V316.4M449.58,11V316.4M457.95,11V316.4M466.32,11V316.4M474.69,11V316.4M483.06,11V316.4M491.43,11V316.4M79.8,22.63H500.1M79.8,32.75H500.1M79.8,42.88H500.1M79.8,53.01H500.1M79.8,73.26H500.1M79.8,83.39H500.1M79.8,93.52H500.1M79.8,103.64H500.1M79.8,123.90H500.1M79.8,134.02H500.1M79.8,144.15H500.1M79.8,154.28H500.1M79.8,174.53H500.1M79.8,184.66H500.1M79.8,194.79H500.1M79.8,204.91H500.1M79.8,225.17H500.1M79.8,235.29H500.1M79.8,245.42H500.1M79.8,255.55H500.1M79.8,275.80H500.1M79.8,285.93H500.1M79.8,296.06H500.1M79.8,306.18H500.1" stroke="#004500" stroke-width="1.1"/><path d="M165.00,11V316.4M248.70,11V316.4M332.40,11V316.4M416.10,11V316.4M79.8,63.14H500.1M79.8,113.77H500.1M79.8,164.41H500.1M79.8,215.04H500.1M79.8,265.68H500.1" stroke="#007600" stroke-width="1.1"/></g><line x1="72.2" y1="12.50" x2="78.3" y2="12.50" stroke="#1c1c1c" stroke-width="1.3"/><text x="69.6" y="17.90" text-anchor="end">3</text><line x1="72.2" y1="63.14" x2="78.3" y2="63.14" stroke="#1c1c1c" stroke-width="1.3"/><text x="69.6" y="68.54" text-anchor="end">2</text><line x1="72.2" y1="113.77" x2="78.3" y2="113.77" stroke="#1c1c1c" stroke-width="1.3"/><text x="69.6" y="119.17" text-anchor="end">1</text><line x1="72.2" y1="164.41" x2="78.3" y2="164.41" stroke="#1c1c1c" stroke-width="1.3"/><text x="69.6" y="169.81" text-anchor="end">0</text><line x1="72.2" y1="215.04" x2="78.3" y2="215.04" stroke="#1c1c1c" stroke-width="1.3"/><text x="69.6" y="220.44" text-anchor="end">-1</text><line x1="72.2" y1="265.68" x2="78.3" y2="265.68" stroke="#1c1c1c" stroke-width="1.3"/><text x="69.6" y="271.07" text-anchor="end">-2</text><line x1="72.2" y1="316.31" x2="78.3" y2="316.31" stroke="#1c1c1c" stroke-width="1.3"/><text x="69.6" y="321.71" text-anchor="end">-3</text><line x1="81.30" y1="319.4" x2="81.30" y2="325" stroke="#1c1c1c" stroke-width="1.3"/><text x="80.30" y="341.6" text-anchor="middle">0</text><line x1="165.00" y1="319.4" x2="165.00" y2="325" stroke="#1c1c1c" stroke-width="1.3"/><text x="164.00" y="341.6" text-anchor="middle">0.001</text><line x1="248.70" y1="319.4" x2="248.70" y2="325" stroke="#1c1c1c" stroke-width="1.3"/><text x="247.70" y="341.6" text-anchor="middle">0.002</text><line x1="332.40" y1="319.4" x2="332.40" y2="325" stroke="#1c1c1c" stroke-width="1.3"/><text x="331.40" y="341.6" text-anchor="middle">0.003</text><line x1="416.10" y1="319.4" x2="416.10" y2="325" stroke="#1c1c1c" stroke-width="1.3"/><text x="415.10" y="341.6" text-anchor="middle">0.004</text><line x1="499.80" y1="319.4" x2="499.80" y2="325" stroke="#1c1c1c" stroke-width="1.3"/><text x="498.80" y="341.6" text-anchor="middle">0.005</text><text x="290.5" y="365.2" text-anchor="middle" style="font-size:15px">时间</text><text transform="translate(44.4,165.5) rotate(-90)" text-anchor="middle" style="font-size:15px">幅值</text></svg>
<svg class="a" style="left:1260.5px;top:-306.4px" width="379.5" height="374.2" viewBox="0 0 379.5 374.2"><defs><linearGradient id="fl0" x1="0" x2="1" y1="0" y2="0"><stop offset="0" stop-color="#c6c6c6"/><stop offset=".2" stop-color="#d2d2d2"/><stop offset=".75" stop-color="#d2d2d2"/><stop offset="1" stop-color="#c2c2c2"/></linearGradient><linearGradient id="fr0" x1="0" x2="1" y1="0" y2="0"><stop offset="0" stop-color="#bfbfbf"/><stop offset=".45" stop-color="#a3a3a3"/><stop offset="1" stop-color="#747474"/></linearGradient></defs><rect width="530.5" height="374.2" fill="#bfbfbf"/><rect x="0" y="0" width="530.5" height="2.2" fill="#d2d2d2"/><rect x="0" y="0" width="15.5" height="374.2" fill="url(#fl0)"/><rect x="514.5" y="0" width="16" height="374.2" fill="url(#fr0)"/><polygon points="0,374.2 3,371.9 530.5,371.9 530.5,374.2" fill="#8e8e8e"/><rect x="529.2" y="0" width="1.3" height="374.2" fill="#444"/><rect x="79.9" y="10.4" width="422.1" height="307" fill="#d6d6d6"/><rect x="79.9" y="10.4" width="421.3" height="306.2" fill="#4a4a4a"/><rect x="80.5" y="11" width="420.7" height="305.6" fill="#000"/><clipPath id="cp0"><rect x="80.5" y="11" width="420.7" height="305.6"/></clipPath><g clip-path="url(#cp0)" fill="none"><path d="M88.57,11V316.6M95.44,11V316.6M102.31,11V316.6M109.18,11V316.6M116.05,11V316.6M122.92,11V316.6M129.79,11V316.6M136.66,11V316.6M143.53,11V316.6M150.40,11V316.6M157.27,11V316.6M164.14,11V316.6M171.01,11V316.6M177.88,11V316.6M184.75,11V316.6M191.62,11V316.6M198.49,11V316.6M205.36,11V316.6M212.23,11V316.6M225.97,11V316.6M232.84,11V316.6M239.71,11V316.6M246.58,11V316.6M253.45,11V316.6M260.32,11V316.6M267.19,11V316.6M274.06,11V316.6M280.93,11V316.6M287.80,11V316.6M294.67,11V316.6M301.54,11V316.6M308.41,11V316.6M315.28,11V316.6M322.15,11V316.6M329.02,11V316.6M335.89,11V316.6M342.76,11V316.6M349.63,11V316.6M363.37,11V316.6M370.24,11V316.6M377.11,11V316.6M80.5,22.23H381.5M80.5,32.35H381.5M80.5,42.48H381.5M80.5,52.61H381.5M80.5,72.86H381.5M80.5,82.99H381.5M80.5,93.12H381.5M80.5,103.24H381.5M80.5,123.50H381.5M80.5,133.62H381.5M80.5,143.75H381.5M80.5,153.88H381.5M80.5,174.13H381.5M80.5,184.26H381.5M80.5,194.39H381.5M80.5,204.51H381.5M80.5,224.77H381.5M80.5,234.89H381.5M80.5,245.02H381.5M80.5,255.15H381.5M80.5,275.40H381.5M80.5,285.53H381.5M80.5,295.66H381.5M80.5,305.78H381.5" stroke="#004500" stroke-width="1.1"/><path d="M219.10,11V316.6M356.50,11V316.6M80.5,62.73H381.5M80.5,113.37H381.5M80.5,164.00H381.5M80.5,214.64H381.5M80.5,265.27H381.5" stroke="#007600" stroke-width="1.1"/></g><line x1="72.9" y1="12.10" x2="79" y2="12.10" stroke="#1c1c1c" stroke-width="1.3"/><text x="70.3" y="17.50" text-anchor="end">3</text><line x1="72.9" y1="62.73" x2="79" y2="62.73" stroke="#1c1c1c" stroke-width="1.3"/><text x="70.3" y="68.13" text-anchor="end">2</text><line x1="72.9" y1="113.37" x2="79" y2="113.37" stroke="#1c1c1c" stroke-width="1.3"/><text x="70.3" y="118.77" text-anchor="end">1</text><line x1="72.9" y1="164.00" x2="79" y2="164.00" stroke="#1c1c1c" stroke-width="1.3"/><text x="70.3" y="169.40" text-anchor="end">0</text><line x1="72.9" y1="214.64" x2="79" y2="214.64" stroke="#1c1c1c" stroke-width="1.3"/><text x="70.3" y="220.04" text-anchor="end">-1</text><line x1="72.9" y1="265.27" x2="79" y2="265.27" stroke="#1c1c1c" stroke-width="1.3"/><text x="70.3" y="270.67" text-anchor="end">-2</text><line x1="72.9" y1="315.91" x2="79" y2="315.91" stroke="#1c1c1c" stroke-width="1.3"/><text x="70.3" y="321.31" text-anchor="end">-3</text><line x1="81.70" y1="319.6" x2="81.70" y2="325.2" stroke="#1c1c1c" stroke-width="1.3"/><text x="80.70" y="341.8" text-anchor="middle">0</text><line x1="219.10" y1="319.6" x2="219.10" y2="325.2" stroke="#1c1c1c" stroke-width="1.3"/><text x="218.10" y="341.8" text-anchor="middle">0.002</text><line x1="356.50" y1="319.6" x2="356.50" y2="325.2" stroke="#1c1c1c" stroke-width="1.3"/><text x="355.50" y="341.8" text-anchor="middle">0.004</text><text x="288.5" y="365.4" text-anchor="middle" style="font-size:15px">时间</text></svg>
<svg class="a" style="left:1260.5px;top:98.4px" width="379.5" height="374.2" viewBox="0 0 379.5 374.2"><defs><linearGradient id="fl3" x1="0" x2="1" y1="0" y2="0"><stop offset="0" stop-color="#c6c6c6"/><stop offset=".2" stop-color="#d2d2d2"/><stop offset=".75" stop-color="#d2d2d2"/><stop offset="1" stop-color="#c2c2c2"/></linearGradient><linearGradient id="fr3" x1="0" x2="1" y1="0" y2="0"><stop offset="0" stop-color="#bfbfbf"/><stop offset=".45" stop-color="#a3a3a3"/><stop offset="1" stop-color="#747474"/></linearGradient></defs><rect width="530.5" height="374.2" fill="#bfbfbf"/><rect x="0" y="0" width="530.5" height="2.2" fill="#d2d2d2"/><rect x="0" y="0" width="15.5" height="374.2" fill="url(#fl3)"/><rect x="514.5" y="0" width="16" height="374.2" fill="url(#fr3)"/><polygon points="0,374.2 3,371.9 530.5,371.9 530.5,374.2" fill="#8e8e8e"/><rect x="529.2" y="0" width="1.3" height="374.2" fill="#444"/><rect x="90.2" y="10.3" width="422.1" height="307" fill="#d6d6d6"/><rect x="90.2" y="10.3" width="421.3" height="306.2" fill="#4a4a4a"/><rect x="90.8" y="10.9" width="420.7" height="305.6" fill="#000"/><clipPath id="cp3"><rect x="90.8" y="10.9" width="420.7" height="305.6"/></clipPath><g clip-path="url(#cp3)" fill="none"><path d="M99.28,10.9V316.5M105.97,10.9V316.5M112.65,10.9V316.5M119.34,10.9V316.5M126.02,10.9V316.5M132.71,10.9V316.5M139.39,10.9V316.5M146.08,10.9V316.5M152.76,10.9V316.5M159.45,10.9V316.5M166.13,10.9V316.5M172.82,10.9V316.5M179.50,10.9V316.5M186.19,10.9V316.5M192.87,10.9V316.5M199.56,10.9V316.5M206.24,10.9V316.5M212.93,10.9V316.5M219.61,10.9V316.5M232.98,10.9V316.5M239.67,10.9V316.5M246.35,10.9V316.5M253.04,10.9V316.5M259.72,10.9V316.5M266.41,10.9V316.5M273.09,10.9V316.5M279.78,10.9V316.5M286.46,10.9V316.5M293.15,10.9V316.5M299.83,10.9V316.5M306.52,10.9V316.5M313.20,10.9V316.5M319.89,10.9V316.5M326.57,10.9V316.5M333.26,10.9V316.5M339.94,10.9V316.5M346.63,10.9V316.5M353.31,10.9V316.5M366.68,10.9V316.5M373.37,10.9V316.5M380.05,10.9V316.5M90.8,21.08H381.5M90.8,29.77H381.5M90.8,38.45H381.5M90.8,47.13H381.5M90.8,64.50H381.5M90.8,73.18H381.5M90.8,81.86H381.5M90.8,90.55H381.5M90.8,107.91H381.5M90.8,116.60H381.5M90.8,125.28H381.5M90.8,133.96H381.5M90.8,151.33H381.5M90.8,160.01H381.5M90.8,168.69H381.5M90.8,177.38H381.5M90.8,194.74H381.5M90.8,203.43H381.5M90.8,212.11H381.5M90.8,220.79H381.5M90.8,238.16H381.5M90.8,246.84H381.5M90.8,255.52H381.5M90.8,264.21H381.5M90.8,281.57H381.5M90.8,290.26H381.5M90.8,298.94H381.5M90.8,307.62H381.5" stroke="#004500" stroke-width="1.1"/><path d="M226.30,10.9V316.5M360.00,10.9V316.5M90.8,55.81H381.5M90.8,99.23H381.5M90.8,142.64H381.5M90.8,186.06H381.5M90.8,229.47H381.5M90.8,272.89H381.5" stroke="#007600" stroke-width="1.1"/></g><line x1="83.2" y1="12.40" x2="89.3" y2="12.40" stroke="#1c1c1c" stroke-width="1.3"/><text x="80.6" y="17.80" text-anchor="end">130</text><line x1="83.2" y1="55.81" x2="89.3" y2="55.81" stroke="#1c1c1c" stroke-width="1.3"/><text x="80.6" y="61.21" text-anchor="end">120</text><line x1="83.2" y1="99.23" x2="89.3" y2="99.23" stroke="#1c1c1c" stroke-width="1.3"/><text x="80.6" y="104.63" text-anchor="end">110</text><line x1="83.2" y1="142.64" x2="89.3" y2="142.64" stroke="#1c1c1c" stroke-width="1.3"/><text x="80.6" y="148.04" text-anchor="end">100</text><line x1="83.2" y1="186.06" x2="89.3" y2="186.06" stroke="#1c1c1c" stroke-width="1.3"/><text x="80.6" y="191.46" text-anchor="end">90</text><line x1="83.2" y1="229.47" x2="89.3" y2="229.47" stroke="#1c1c1c" stroke-width="1.3"/><text x="80.6" y="234.87" text-anchor="end">80</text><line x1="83.2" y1="272.89" x2="89.3" y2="272.89" stroke="#1c1c1c" stroke-width="1.3"/><text x="80.6" y="278.29" text-anchor="end">70</text><line x1="83.2" y1="316.30" x2="89.3" y2="316.30" stroke="#1c1c1c" stroke-width="1.3"/><text x="80.6" y="321.70" text-anchor="end">60</text><line x1="92.60" y1="319.5" x2="92.60" y2="325.1" stroke="#1c1c1c" stroke-width="1.3"/><text x="91.60" y="341.7" text-anchor="middle">0</text><line x1="226.30" y1="319.5" x2="226.30" y2="325.1" stroke="#1c1c1c" stroke-width="1.3"/><text x="225.30" y="341.7" text-anchor="middle">0.002</text><line x1="360.00" y1="319.5" x2="360.00" y2="325.1" stroke="#1c1c1c" stroke-width="1.3"/><text x="359.00" y="341.7" text-anchor="middle">0.004</text><text x="280.5" y="365.4" text-anchor="middle" style="font-size:15px">时间</text><text transform="translate(44.8,164) rotate(-90)" text-anchor="middle" style="font-size:15px">幅值</text></svg>
<svg class="a" style="left:1260.5px;top:503.4px" width="379.5" height="374.2" viewBox="0 0 379.5 374.2"><defs><linearGradient id="fl4" x1="0" x2="1" y1="0" y2="0"><stop offset="0" stop-color="#c6c6c6"/><stop offset=".2" stop-color="#d2d2d2"/><stop offset=".75" stop-color="#d2d2d2"/><stop offset="1" stop-color="#c2c2c2"/></linearGradient><linearGradient id="fr4" x1="0" x2="1" y1="0" y2="0"><stop offset="0" stop-color="#bfbfbf"/><stop offset=".45" stop-color="#a3a3a3"/><stop offset="1" stop-color="#747474"/></linearGradient></defs><rect width="530.5" height="374.2" fill="#bfbfbf"/><rect x="0" y="0" width="530.5" height="2.2" fill="#d2d2d2"/><rect x="0" y="0" width="15.5" height="374.2" fill="url(#fl4)"/><rect x="514.5" y="0" width="16" height="374.2" fill="url(#fr4)"/><polygon points="0,374.2 3,371.9 530.5,371.9 530.5,374.2" fill="#8e8e8e"/><rect x="529.2" y="0" width="1.3" height="374.2" fill="#444"/><rect x="81.5" y="10.3" width="422.1" height="307.1" fill="#d6d6d6"/><rect x="81.5" y="10.3" width="421.3" height="306.3" fill="#4a4a4a"/><rect x="82.1" y="10.9" width="420.7" height="305.7" fill="#000"/><clipPath id="cp4"><rect x="82.1" y="10.9" width="420.7" height="305.7"/></clipPath><g clip-path="url(#cp4)" fill="none"><path d="M90.07,10.9V316.6M96.94,10.9V316.6M103.81,10.9V316.6M110.68,10.9V316.6M117.55,10.9V316.6M124.42,10.9V316.6M131.29,10.9V316.6M138.16,10.9V316.6M145.03,10.9V316.6M151.90,10.9V316.6M158.77,10.9V316.6M165.64,10.9V316.6M172.51,10.9V316.6M179.38,10.9V316.6M186.25,10.9V316.6M193.12,10.9V316.6M199.99,10.9V316.6M206.86,10.9V316.6M213.73,10.9V316.6M227.47,10.9V316.6M234.34,10.9V316.6M241.21,10.9V316.6M248.08,10.9V316.6M254.95,10.9V316.6M261.82,10.9V316.6M268.69,10.9V316.6M275.56,10.9V316.6M282.43,10.9V316.6M289.30,10.9V316.6M296.17,10.9V316.6M303.04,10.9V316.6M309.91,10.9V316.6M316.78,10.9V316.6M323.65,10.9V316.6M330.52,10.9V316.6M337.39,10.9V316.6M344.26,10.9V316.6M351.13,10.9V316.6M364.87,10.9V316.6M371.74,10.9V316.6M378.61,10.9V316.6M82.1,22.32H381.5M82.1,32.44H381.5M82.1,42.56H381.5M82.1,52.68H381.5M82.1,72.92H381.5M82.1,83.04H381.5M82.1,93.16H381.5M82.1,103.28H381.5M82.1,123.52H381.5M82.1,133.64H381.5M82.1,143.76H381.5M82.1,153.88H381.5M82.1,174.12H381.5M82.1,184.24H381.5M82.1,194.36H381.5M82.1,204.48H381.5M82.1,224.72H381.5M82.1,234.84H381.5M82.1,244.96H381.5M82.1,255.08H381.5M82.1,275.32H381.5M82.1,285.44H381.5M82.1,295.56H381.5M82.1,305.68H381.5" stroke="#004500" stroke-width="1.1"/><path d="M220.60,10.9V316.6M358.00,10.9V316.6M82.1,62.80H381.5M82.1,113.40H381.5M82.1,164.00H381.5M82.1,214.60H381.5M82.1,265.20H381.5" stroke="#007600" stroke-width="1.1"/></g><line x1="74.5" y1="12.20" x2="80.6" y2="12.20" stroke="#1c1c1c" stroke-width="1.3"/><text x="71.9" y="17.60" text-anchor="end">25</text><line x1="74.5" y1="62.80" x2="80.6" y2="62.80" stroke="#1c1c1c" stroke-width="1.3"/><text x="71.9" y="68.20" text-anchor="end">20</text><line x1="74.5" y1="113.40" x2="80.6" y2="113.40" stroke="#1c1c1c" stroke-width="1.3"/><text x="71.9" y="118.80" text-anchor="end">15</text><line x1="74.5" y1="164.00" x2="80.6" y2="164.00" stroke="#1c1c1c" stroke-width="1.3"/><text x="71.9" y="169.40" text-anchor="end">10</text><line x1="74.5" y1="214.60" x2="80.6" y2="214.60" stroke="#1c1c1c" stroke-width="1.3"/><text x="71.9" y="220.00" text-anchor="end">5</text><line x1="74.5" y1="265.20" x2="80.6" y2="265.20" stroke="#1c1c1c" stroke-width="1.3"/><text x="71.9" y="270.60" text-anchor="end">0</text><line x1="74.5" y1="315.80" x2="80.6" y2="315.80" stroke="#1c1c1c" stroke-width="1.3"/><text x="71.9" y="321.20" text-anchor="end">-5</text><line x1="83.20" y1="319.6" x2="83.20" y2="325.2" stroke="#1c1c1c" stroke-width="1.3"/><text x="82.20" y="341.8" text-anchor="middle">0</text><line x1="220.60" y1="319.6" x2="220.60" y2="325.2" stroke="#1c1c1c" stroke-width="1.3"/><text x="219.60" y="341.8" text-anchor="middle">0.002</text><line x1="358.00" y1="319.6" x2="358.00" y2="325.2" stroke="#1c1c1c" stroke-width="1.3"/><text x="357.00" y="341.8" text-anchor="middle">0.004</text><text x="282.5" y="364.9" text-anchor="middle" style="font-size:15px">时间</text><text transform="translate(44.8,164.6) rotate(-90)" text-anchor="middle" style="font-size:15px">幅值</text></svg>
<div class="a" style="left:1290px;top:68px;width:1px;height:30px;background:#bdbdbd"></div>
<div class="a" style="left:1453px;top:865px;font-size:19.6px;line-height:26px;color:#fff;white-space:nowrap;text-shadow:0 0 1px #666,0 0 1px #666,1px 1px 1px #777,-1px -1px 1px #888;opacity:.88"><span style="font-size:17.6px">CSDN @</span>无能且狂怒</div>
</body></html>
